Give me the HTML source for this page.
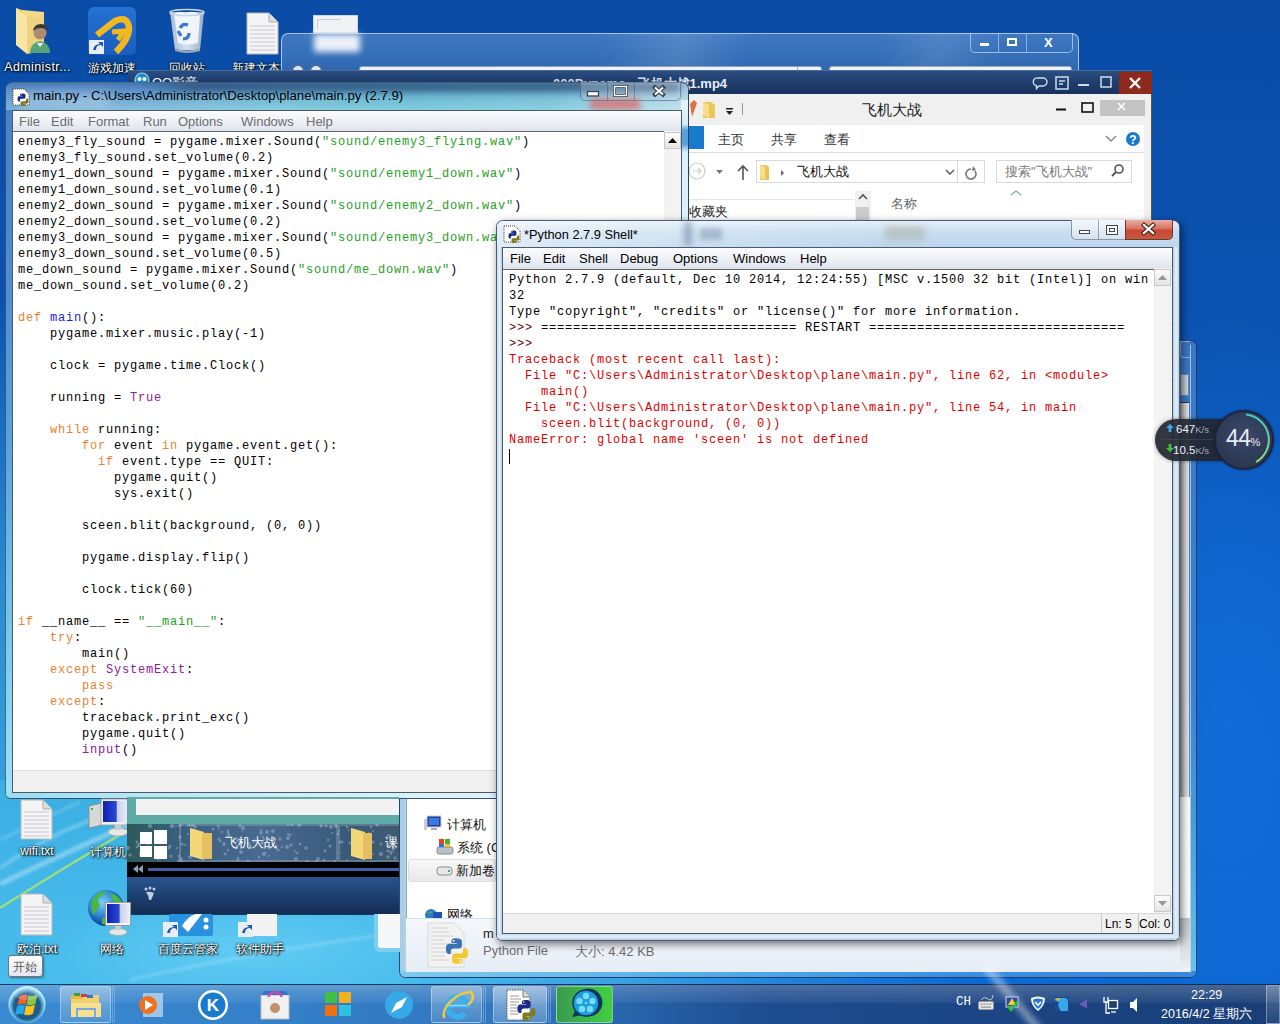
<!DOCTYPE html>
<html><head><meta charset="utf-8">
<style>
*{margin:0;padding:0;box-sizing:border-box}
html,body{width:1280px;height:1024px;overflow:hidden}
body{position:relative;font-family:"Liberation Sans",sans-serif;font-size:12px;background:#0b4fa9}
.a{position:absolute}
.mono{font-family:"Liberation Mono",monospace;font-size:12px;letter-spacing:0.8px;line-height:16px;white-space:pre;color:#000}
.menu span{position:absolute;top:2.5px}
.dl{position:absolute;color:#fff;font-size:12px;text-shadow:0 0 2px rgba(0,0,0,.9),1px 1px 2px #000,0 0 3px rgba(0,0,0,.6);white-space:nowrap;text-align:center}
.tbtn{position:absolute;border:1px solid rgba(255,255,255,.35);border-radius:3px;background:linear-gradient(180deg,rgba(255,255,255,.35),rgba(255,255,255,.12))}
</style></head><body>


<!-- ============ WALLPAPER ============ -->
<div class="a" style="left:0;top:0;width:1280px;height:1024px;background:
radial-gradient(ellipse 200px 400px at 1230px 720px,rgba(20,115,225,.6) 0%,rgba(13,106,210,0) 100%),
linear-gradient(180deg,#0a4ca6 0%,#0b52b0 30%,#0c5cc2 55%,#0d64ce 75%,#0d68d4 100%)"></div>
<div class="a" style="left:0;top:300px;width:20px;height:700px;background:linear-gradient(180deg,rgba(30,120,200,0) 0%,#2a8ad0 40%,#40b4e6 100%)"></div>
<div class="a" style="left:0;top:780px;width:420px;height:210px;background:linear-gradient(180deg,#3aaee2 0%,#45b9ea 60%,#48bcec 100%)"></div>
<div class="a" style="left:400px;top:970px;width:880px;height:14px;background:linear-gradient(90deg,#48b8ea 0%,#3aa2e2 25%,#2280d8 45%,#0e68d4 65%,#0d68d4 100%)"></div>
<div class="a" style="left:0;top:880px;width:420px;height:105px;background:radial-gradient(ellipse 220px 60px at 250px 70px,rgba(130,225,255,.45),rgba(130,225,255,0))"></div>
<svg class="a" style="left:0;top:780px" width="420" height="210">
<defs><filter id="bl" x="-20%" y="-20%" width="140%" height="140%"><feGaussianBlur stdDeviation="1.5"/></filter></defs>
<path d="M0 128 Q60 90 135 46" stroke="#a8e070" stroke-width="2.5" fill="none" opacity=".9"/>
<path d="M0 104 Q50 80 135 42" stroke="#fff" stroke-width="5" fill="none" opacity=".35" filter="url(#bl)"/>
<path d="M0 88 Q40 60 90 40" stroke="#fff" stroke-width="3" fill="none" opacity=".3" filter="url(#bl)"/>
<path d="M0 60 Q40 40 80 22" stroke="#fff" stroke-width="2" fill="none" opacity=".25" filter="url(#bl)"/>
<path d="M130 200 Q260 170 420 150" stroke="#fff" stroke-width="3" fill="none" opacity=".2" filter="url(#bl)"/>
</svg>

<!-- ============ TOP DESKTOP ICONS ============ -->
<!-- Administrator folder -->
<svg class="a" style="left:14px;top:7px" width="42" height="48">
<path d="M2 1 L30 10 L30 44 L2 38 Z" fill="#e6c870"/>
<path d="M8 3 L30 5 L30 40 L8 38 Z" fill="#f2da8a"/>
<path d="M2 1 L13 10 L13 47 L2 38Z" fill="#f7e6a4"/>
<path d="M13 10 L30 10 L30 44 L13 47Z" fill="#eed27e"/>
<path d="M16 46 q0-10 10-12 q10 2 10 12z" fill="#5aa27a"/>
<path d="M23 36 l3 4 3-4z" fill="#fff"/>
<circle cx="26" cy="26" r="6.5" fill="#b08a70"/>
<path d="M19 24 q1-7 8-7 q6 0 7 6 q-3-2-7-2 q-5 0-8 3z" fill="#3a3830"/>
</svg>
<div class="dl" style="left:0;top:60px;width:75px;font-size:12.5px;letter-spacing:.4px">Administr...</div>
<!-- game accel -->
<div class="a" style="left:88px;top:7px;width:48px;height:48px;border-radius:6px;background:linear-gradient(180deg,#2472d4,#1a5cc0)"></div>
<svg class="a" style="left:88px;top:7px" width="48" height="48">
<path d="M9 28 L27 14 Q41 8 41 23 Q40 33 28 45" fill="none" stroke="#f2b820" stroke-width="6.5"/>
<path d="M24 25 L36 24 L30 33" fill="none" stroke="#f2b820" stroke-width="5"/>
<rect x="1" y="33" width="15" height="14" fill="#e8eef6"/>
<path d="M5 43 q1-6 7-6 l-2-2 h5 v5 l-2-2 q-5 0-5 5z" fill="#1e5aa8"/>
</svg>
<div class="dl" style="left:80px;top:60px;width:64px">游戏加速</div>
<!-- recycle bin -->
<svg class="a" style="left:168px;top:8px" width="40" height="46">
<defs><linearGradient id="rb" x1="0" x2="1"><stop offset="0" stop-color="#b8c8d8"/><stop offset=".5" stop-color="#e8f0f8"/><stop offset="1" stop-color="#a8b8c8"/></linearGradient></defs>
<path d="M2 4 L36 4 L32 42 L7 42 Z" fill="url(#rb)" opacity=".9"/>
<path d="M6 6 q6-4 12 0 q6-5 14 1 l-2 28 q-10 3-20 0z" fill="#f4f8fc" opacity=".9"/>
<path d="M12 20 q3-5 8-3 M21 25 q0 6-6 6 M13 28 l-3-5" fill="none" stroke="#3a78d0" stroke-width="3.2"/>
<ellipse cx="19" cy="4.5" rx="17" ry="3" fill="none" stroke="#c8d4e0" stroke-width="1.5"/>
<path d="M7 40 Q19 45 32 40 L32 43 Q19 47 7 43Z" fill="#9aa8b8"/>
</svg>
<div class="dl" style="left:152px;top:60px;width:70px">回收站</div>
<!-- txt -->
<svg class="a" style="left:246px;top:12px" width="34" height="44">
<path d="M1 1 L23 1 L32 10 L32 42 L1 42Z" fill="#f4f4f4" stroke="#b8b8b8"/>
<path d="M23 1 L23 10 L32 10" fill="#dcdcdc" stroke="#b0b0b0"/>
<g stroke="#c8c8d0" stroke-width="1"><path d="M4 14h25M4 18h25M4 22h25M4 26h25M4 30h25M4 34h25M4 38h25"/></g>
</svg>
<div class="dl" style="left:232px;top:60px;width:60px;text-align:left;overflow:hidden;height:14px">新建文本文档</div>
<div class="a" style="left:313px;top:15px;width:45px;height:18px;background:#f0f2f4;border:1px solid #cfd6de"></div>
<div class="a" style="left:317px;top:19px;width:24px;height:10px;border:1px solid #c8ccd4;border-right:0;border-bottom:0"></div>

<!-- ============ BACK AERO WINDOW ============ -->
<div class="a" style="left:281px;top:33px;width:798px;height:40px;border-radius:7px 7px 0 0;border:1px solid rgba(200,220,245,.8);border-bottom:0;background:linear-gradient(100deg,rgba(255,255,255,0) 40%,rgba(255,255,255,.12) 50%,rgba(255,255,255,0) 58%,rgba(255,255,255,0) 75%,rgba(255,255,255,.1) 82%,rgba(255,255,255,0) 90%),linear-gradient(180deg,#3f78c2 0%,#3670b8 50%,#2f66ae 100%)"></div>
<div class="a" style="left:314px;top:34px;width:46px;height:18px;background:rgba(245,248,252,.95);filter:blur(3px)"></div>
<div class="a" style="left:970px;top:33px;width:103px;height:20px;border:1px solid rgba(220,235,255,.6);border-top:0;border-radius:0 0 5px 5px"></div>
<div class="a" style="left:998px;top:33px;width:1px;height:19px;background:rgba(220,235,255,.5)"></div>
<div class="a" style="left:1026px;top:33px;width:1px;height:19px;background:rgba(220,235,255,.5)"></div>
<div class="a" style="left:980px;top:43px;width:9px;height:3px;background:#fff"></div>
<div class="a" style="left:1007px;top:38px;width:10px;height:8px;border:2px solid #fff"></div>
<div class="a" style="left:1044px;top:35px;font-size:13px;font-weight:bold;color:#fff">X</div>
<div class="a" style="left:829px;top:66px;width:243px;height:6px;border-radius:3px 3px 0 0;background:#eef2f6;border:1px solid #9ab"></div>
<div class="a" style="left:359px;top:66px;width:463px;height:6px;border-radius:3px 3px 0 0;background:#eef2f6;border:1px solid #8aa0c0"></div>
<div class="a" style="left:797px;top:66px;width:1px;height:5px;background:#aab"></div>
<div class="a" style="left:291px;top:64px;width:14px;height:14px;border-radius:50%;background:#dde6f0;border:2px solid #4a6a98"></div>
<div class="a" style="left:309px;top:64px;width:14px;height:14px;border-radius:50%;background:#dde6f0;border:2px solid #4a6a98"></div>

<!-- ============ QQ PLAYER TITLE ============ -->
<div class="a" style="left:128px;top:70px;width:1024px;height:25px;background:linear-gradient(180deg,#2b4d80 0%,#1f3d6c 50%,#16315c 100%);border-top:1px solid #4a6a9a"></div>
<svg class="a" style="left:134px;top:72px" width="16" height="16"><circle cx="8" cy="8" r="7" fill="#1c8cc8" stroke="#8ad8f8" stroke-width="1.2"/><circle cx="5.5" cy="7" r="2" fill="#fff"/><circle cx="10.5" cy="7" r="2" fill="#fff"/></svg>
<div class="a" style="left:152px;top:74px;color:#fff;font-size:13px">QQ影音</div>
<div class="a" style="left:553px;top:75px;color:#e8eef8;font-size:13px;font-weight:bold">000Dynamo - 飞机大战1.mp4</div>
<svg class="a" style="left:1030px;top:72px" width="122" height="22">
<path d="M8 6 h5 a3.5 3.5 0 0 1 0 8 h-4 l-2.5 2.5 v-2.7 a3.6 3.6 0 0 1 1.5-7.8z" fill="none" stroke="#cde" stroke-width="1.4"/>
<path d="M26 5 h12 v12 h-12z M29 9 h6 M29 12 h4" fill="none" stroke="#cde" stroke-width="1.5"/>
<path d="M48 13 h11" stroke="#cde" stroke-width="2"/>
<path d="M71 5 h10 v10 h-10z" fill="none" stroke="#cde" stroke-width="1.5"/>
<rect x="89" y="0" width="33" height="22" fill="#8e2a1c"/>
<path d="M100 6 l10 10 M110 6 l-10 10" stroke="#fff" stroke-width="2.4"/>
</svg>

<!-- ============ EXPLORER (WIN8) TOP ============ -->
<div class="a" style="left:686px;top:94px;width:466px;height:127px;background:#f0f0f0;border-right:1px solid #555"></div>
<div class="a" style="left:688px;top:125px;width:456px;height:100px;background:#fff"></div>
<div class="a" style="left:688px;top:126px;width:16px;height:23px;background:#1979ca"></div>
<div class="a" style="left:718px;top:131px;font-size:13px;color:#333">主页</div>
<div class="a" style="left:771px;top:131px;font-size:13px;color:#333">共享</div>
<div class="a" style="left:824px;top:131px;font-size:13px;color:#333">查看</div>
<div class="a" style="left:688px;top:152px;width:456px;height:1px;background:#dadbdc"></div>
<div class="a" style="left:862px;top:101px;font-size:15px;color:#222">飞机大战</div>
<svg class="a" style="left:688px;top:96px" width="80" height="28">
<path d="M2 8 l4 -4 l3 3 l-5 14z" fill="#e07040"/>
<path d="M15 6 h8 l4 3 v13 h-12z" fill="#eac75a"/><path d="M15 6 l6 3 v13 l-6-3z" fill="#f6df8a"/>
<path d="M38 15 h7 l-3.5 4z" fill="#222"/><rect x="38" y="12" width="7" height="1.5" fill="#222"/>
<rect x="54" y="7" width="1" height="12" fill="#999"/>
</svg>
<svg class="a" style="left:1050px;top:100px" width="96" height="18">
<rect x="6" y="8.5" width="10" height="2" fill="#111"/>
<rect x="32" y="3" width="11" height="9" fill="none" stroke="#111" stroke-width="1.6"/>
<rect x="50" y="-4" width="45" height="20" fill="#c3c3c3"/>
<path d="M68 3 l7 7 M75 3 l-7 7" stroke="#fff" stroke-width="1.5"/>
</svg>
<svg class="a" style="left:1100px;top:130px" width="44" height="18">
<path d="M6 6 l5 5 l5-5" fill="none" stroke="#888" stroke-width="1.5"/>
<circle cx="33" cy="9" r="7" fill="#1a7ad0"/>
<text x="33" y="13.5" font-size="12" font-weight="bold" fill="#fff" text-anchor="middle" font-family="Liberation Sans">?</text>
</svg>
<!-- address row -->
<svg class="a" style="left:688px;top:158px" width="70" height="26">
<circle cx="9" cy="13" r="8" fill="none" stroke="#ccc" stroke-width="1.2"/>
<path d="M5 13h8 M10 10l3 3-3 3" fill="none" stroke="#ccc" stroke-width="1.2"/>
<path d="M28 12h7l-3.5 4z" fill="#777"/>
<path d="M55 22 v-14 M50 13 l5-5 l5 5" fill="none" stroke="#555" stroke-width="1.6"/>
</svg>
<div class="a" style="left:756px;top:160px;width:229px;height:23px;border:1px solid #d9d9d9;background:#fff"></div>
<div class="a" style="left:957px;top:160px;width:1px;height:23px;background:#d9d9d9"></div>
<svg class="a" style="left:760px;top:162px" width="225" height="20">
<path d="M0 3 h6 l3 2 v13 h-9z" fill="#e8c457"/><path d="M0 3 l5 2 v13 l-5-2z" fill="#f6df88"/>
<path d="M21 8 l3 3 -3 3z" fill="#666"/>
<path d="M186 8 l4 4 4-4" fill="none" stroke="#555" stroke-width="1.4"/>
<path d="M211 7 a5 5 0 1 0 4 2" fill="none" stroke="#777" stroke-width="1.6"/><path d="M213 4 l3 4 -4 1z" fill="#777"/>
</svg>
<div class="a" style="left:797px;top:163px;font-size:13px;color:#111">飞机大战</div>
<div class="a" style="left:996px;top:160px;width:136px;height:23px;border:1px solid #d9d9d9;background:#fff"></div>
<div class="a" style="left:1005px;top:163px;font-size:13px;color:#777">搜索"飞机大战"</div>
<svg class="a" style="left:1110px;top:163px" width="16" height="16"><circle cx="9" cy="6" r="4" fill="none" stroke="#555" stroke-width="1.6"/><path d="M6 9 l-4 4" stroke="#555" stroke-width="2"/></svg>
<div class="a" style="left:688px;top:199px;width:166px;height:1px;background:#e5e5e5"></div>
<div class="a" style="left:689px;top:203px;font-size:13px;color:#222">收藏夹</div>
<div class="a" style="left:855px;top:191px;width:16px;height:30px;background:#f0f0f0"></div>
<svg class="a" style="left:855px;top:191px" width="16" height="14"><path d="M4 8 l4-4 4 4" fill="none" stroke="#555" stroke-width="1.6"/></svg>
<div class="a" style="left:856px;top:207px;width:13px;height:15px;background:#cdcdcd"></div>
<div class="a" style="left:891px;top:195px;font-size:13px;color:#666">名称</div>
<svg class="a" style="left:1010px;top:189px" width="12" height="8"><path d="M1 6 l5-4 5 4" fill="none" stroke="#8aa" stroke-width="1.3"/></svg>

<!-- ============ BOTTOM EXPLORER (WIN7) ============ -->
<div class="a" style="left:399px;top:340px;width:798px;height:638px;border-radius:7px;background:linear-gradient(180deg,#3a78c4 0%,#3d82cf 55%,#4a9ada 75%,#6cc2ec 100%);border:1px solid rgba(20,50,90,.8)"></div>
<div class="a" style="left:400px;top:790px;width:96px;height:187px;border-radius:0 0 0 6px;background:linear-gradient(90deg,#a8cce4 0%,#e4f2fa 45%,#a8d0ec 100%)"></div>
<div class="a" style="left:400px;top:971px;width:796px;height:6px;border-radius:0 0 6px 6px;background:linear-gradient(90deg,#7ecbee 0%,#5eb2e8 30%,#3d8ee0 70%,#3a86dc 100%)"></div>
<div class="a" style="left:1190px;top:345px;width:1px;height:628px;background:rgba(230,240,255,.6)"></div>
<div class="a" style="left:1180px;top:341px;width:10px;height:17px;border:1px solid rgba(200,220,245,.6);border-right:0;border-radius:0 0 0 4px"></div>
<div class="a" style="left:1180px;top:374px;width:9px;height:22px;background:linear-gradient(90deg,#a8b0bc,#d8dce0);border:1px solid #6a88b0"></div>
<div class="a" style="left:1180px;top:402px;width:9px;height:516px;background:linear-gradient(90deg,#a0a0a0 0%,#d0d0d0 50%,#e8e8e8 100%);border-top:1px solid #333"></div>
<div class="a" style="left:406px;top:797px;width:784px;height:175px;background:#fff;border-left:1px solid #8fa8c0"></div>
<div class="a" style="left:1180px;top:918px;width:10px;height:54px;background:linear-gradient(180deg,#c8c8c8,#eef2f6)"></div>
<div class="a" style="left:406px;top:918px;width:774px;height:54px;background:linear-gradient(180deg,#f4f7fb,#e6edf5);border-top:1px solid #d5dfea"></div>
<svg class="a" style="left:424px;top:815px" width="20" height="18">
<rect x="3" y="1" width="14" height="11" fill="#1e3f9a" stroke="#ccd" /><rect x="5" y="3" width="10" height="7" fill="#3a7ae0"/>
<rect x="7" y="13" width="6" height="2" fill="#aaa"/><rect x="0" y="4" width="3" height="11" fill="#ccc"/>
</svg>
<div class="a" style="left:447px;top:816px;font-size:13px;color:#111">计算机</div>
<svg class="a" style="left:436px;top:838px" width="18" height="18">
<rect x="1" y="9" width="16" height="7" rx="2" fill="#b8c0c8" stroke="#889"/>
<rect x="3" y="1" width="5" height="5" fill="#e84020"/><rect x="9" y="1" width="5" height="5" fill="#4ab030"/><rect x="3" y="6" width="5" height="3" fill="#2a70e0"/><rect x="9" y="6" width="5" height="3" fill="#f0c020"/>
</svg>
<div class="a" style="left:457px;top:839px;font-size:13px;color:#111">系统 (C</div>
<div class="a" style="left:408px;top:859px;width:88px;height:23px;background:linear-gradient(180deg,#f8f8f8,#e8e8e8);border:1px solid #ddd;border-radius:3px"></div>
<svg class="a" style="left:436px;top:865px" width="18" height="12"><rect x="1" y="2" width="15" height="8" rx="3" fill="#e6e8ea" stroke="#889"/><rect x="12" y="5" width="2" height="2" fill="#4a4"/></svg>
<div class="a" style="left:456px;top:862px;font-size:13px;color:#111">新加卷</div>
<svg class="a" style="left:425px;top:908px" width="18" height="10"><circle cx="6" cy="7" r="6" fill="#2a80c0"/><path d="M2 5 q3-3 6 0" fill="#4ab040"/><rect x="8" y="4" width="9" height="7" fill="#2050b0"/></svg>
<div class="a" style="left:447px;top:906px;font-size:13px;color:#111;height:12px;overflow:hidden">网络</div>
<svg class="a" style="left:427px;top:922px" width="42" height="46">
<path d="M1 1 h26 l10 10 v34 h-36z" fill="#f2f2f2" stroke="#d8d8d8"/>
<g stroke="#d0d0d0"><path d="M4 6h16M4 10h18M4 14h22M4 18h14M4 22h20M4 26h16M4 30h22M4 34h14M4 38h18"/></g>
<svg x="16" y="15" width="28" height="28" viewBox="0 0 24 24"><path d="M11.6 1 C7 1 7.3 3 7.3 3 v2.1 h4.4 v0.6 H5.5 S2.5 5.4 2.5 10.1 s2.6 4.5 2.6 4.5 h1.6 v-2.2 s-0.1-2.6 2.6-2.6 h4.4 s2.5 0 2.5-2.4 V3.5 S16.5 1 11.6 1z M9.2 2.4 a0.8 0.8 0 1 1 0 1.6 a0.8 0.8 0 1 1 0-1.6z" fill="#3a74b0"/>
<path d="M12.4 23 C17 23 16.7 21 16.7 21 v-2.1 h-4.4 v-0.6 h6.2 s3 0.3 3-4.4 s-2.6-4.5-2.6-4.5 h-1.6 v2.2 s0.1 2.6-2.6 2.6 H10.3 s-2.5 0-2.5 2.4 v3.9 S7.5 23 12.4 23z M14.8 21.6 a0.8 0.8 0 1 1 0-1.6 a0.8 0.8 0 1 1 0 1.6z" fill="#f2c935"/></svg>
</svg>
<div class="a" style="left:483px;top:926px;font-size:13px;color:#222">m</div>
<div class="a" style="left:483px;top:943px;font-size:13px;color:#6d6d6d">Python File</div>
<div class="a" style="left:575px;top:943px;font-size:13px;color:#6d6d6d">大小: 4.42 KB</div>

<!-- ============ IDLE EDITOR WINDOW ============ -->
<div class="a" style="left:5px;top:82px;width:684px;height:717px;border-radius:7px 7px 6px 6px;border:1px solid rgba(40,60,90,.7);background:linear-gradient(180deg,#4a80c4 0%,#4c88c8 20%,#5aa2d8 50%,#7ccaee 80%,#a0e2f6 100%)"></div>
<div class="a" style="left:6px;top:83px;width:682px;height:27px;border-radius:6px 6px 0 0;background:linear-gradient(90deg,rgba(90,140,200,.5) 0%,rgba(90,140,200,.3) 18%,rgba(100,190,205,.35) 38%,rgba(100,195,210,.5) 60%,rgba(120,205,215,.5) 80%,rgba(220,240,245,.6) 100%),linear-gradient(180deg,#3a6aaa 0%,#5a90c8 25%,#88c0dc 70%,#9cd4e8 100%)"></div>
<div class="a" style="left:140px;top:82px;width:540px;height:10px;background:linear-gradient(90deg,rgba(25,45,85,0) 0%,rgba(25,45,85,.55) 10%,rgba(25,45,85,.55) 100%);filter:blur(3px)"></div>
<div class="a" style="left:20px;top:92px;width:90px;height:16px;background:rgba(255,255,255,.25);filter:blur(6px)"></div>
<div class="a" style="left:590px;top:98px;width:50px;height:12px;background:rgba(220,110,110,.8);filter:blur(3px)"></div>
<div class="a" style="left:681px;top:100px;width:7px;height:698px;border-radius:0 0 6px 0;background:linear-gradient(180deg,#e4f5f9 0px,#d6eef6 24px,#5aa0dc 30px,#5aa0dc 44px,#d8f0f8 52px,#e0f4fa 200px,#c4ecf8 100%)"></div>
<div class="a" style="left:688px;top:90px;width:1px;height:708px;background:rgba(40,60,90,.7)"></div>
<svg class="a" style="left:12px;top:88px" width="18" height="18">
<path d="M1 1 h11 l5 5 v11 h-16z" fill="#fff" stroke="#444" stroke-dasharray="1 1"/>
<svg x="4" y="5" width="14" height="14" viewBox="0 0 24 24"><path d="M11.6 1 C7 1 7.3 3 7.3 3 v2.1 h4.4 v0.6 H5.5 S2.5 5.4 2.5 10.1 s2.6 4.5 2.6 4.5 h1.6 v-2.2 s-0.1-2.6 2.6-2.6 h4.4 s2.5 0 2.5-2.4 V3.5 S16.5 1 11.6 1z M9.2 2.4 a0.8 0.8 0 1 1 0 1.6 a0.8 0.8 0 1 1 0-1.6z" fill="#1c2c84"/>
<path d="M12.4 23 C17 23 16.7 21 16.7 21 v-2.1 h-4.4 v-0.6 h6.2 s3 0.3 3-4.4 s-2.6-4.5-2.6-4.5 h-1.6 v2.2 s0.1 2.6-2.6 2.6 H10.3 s-2.5 0-2.5 2.4 v3.9 S7.5 23 12.4 23z M14.8 21.6 a0.8 0.8 0 1 1 0-1.6 a0.8 0.8 0 1 1 0 1.6z" fill="#807a24"/></svg>
</svg>
<div class="a" style="left:33px;top:88px;font-size:13.2px;color:#000">main.py - C:\Users\Administrator\Desktop\plane\main.py (2.7.9)</div>
<!-- title buttons -->
<div class="a" style="left:580px;top:82px;width:101px;height:19px;border:1px solid rgba(60,80,110,.55);border-top:0;border-radius:0 0 5px 5px;background:linear-gradient(180deg,rgba(255,255,255,.25),rgba(255,255,255,.05))"></div>
<div class="a" style="left:607px;top:82px;width:1px;height:18px;background:rgba(60,80,110,.45)"></div>
<div class="a" style="left:634px;top:82px;width:1px;height:18px;background:rgba(60,80,110,.45)"></div>
<svg class="a" style="left:580px;top:82px" width="101" height="19">
<rect x="7.5" y="9.5" width="11" height="4.5" fill="#fff" stroke="#3a4450" stroke-width="1.3"/>
<rect x="34.5" y="4.5" width="12" height="9" fill="none" stroke="#3a4450" stroke-width="3"/><rect x="34.5" y="4.5" width="12" height="9" fill="none" stroke="#fff" stroke-width="1.4"/>
<path d="M75 5.5 l8 7 M83 5.5 l-8 7" stroke="#3a4450" stroke-width="4.2" stroke-linecap="square"/>
<path d="M75 5.5 l8 7 M83 5.5 l-8 7" stroke="#fff" stroke-width="2" stroke-linecap="butt"/>
</svg>
<div class="a" style="left:6px;top:792px;width:675px;height:6px;border-radius:0 0 0 5px;background:linear-gradient(90deg,#98dcf0 0%,#b8e8f6 20%,#d8f0f8 55%,#eef8fb 100%)"></div>
<!-- client -->
<div class="a" style="left:12px;top:110px;width:670px;height:683px;background:#f0f0f0;border:1px solid #4a5a6a"></div>
<div class="a menu" style="left:13px;top:111px;width:668px;height:20px;background:linear-gradient(180deg,#fafbfd 0%,#eef1f6 50%,#dde3ee 100%);color:#6d6d6d;font-size:13px">
<span style="left:6px">File</span><span style="left:38px">Edit</span><span style="left:75px">Format</span><span style="left:130px">Run</span><span style="left:165px">Options</span><span style="left:228px">Windows</span><span style="left:293px">Help</span>
</div>
<div class="a" style="left:13px;top:131px;width:651px;height:639px;background:#fff;border-top:1px solid #646464;overflow:hidden">
<div class="a mono" style="left:5px;top:2px">enemy3_fly_sound = pygame.mixer.Sound(<span style="color:#1ea01e">&quot;sound/enemy3_flying.wav&quot;</span>)
enemy3_fly_sound.set_volume(0.2)
enemy1_down_sound = pygame.mixer.Sound(<span style="color:#1ea01e">&quot;sound/enemy1_down.wav&quot;</span>)
enemy1_down_sound.set_volume(0.1)
enemy2_down_sound = pygame.mixer.Sound(<span style="color:#1ea01e">&quot;sound/enemy2_down.wav&quot;</span>)
enemy2_down_sound.set_volume(0.2)
enemy3_down_sound = pygame.mixer.Sound(<span style="color:#1ea01e">&quot;sound/enemy3_down.wav&quot;</span>)
enemy3_down_sound.set_volume(0.5)
me_down_sound = pygame.mixer.Sound(<span style="color:#1ea01e">&quot;sound/me_down.wav&quot;</span>)
me_down_sound.set_volume(0.2)

<span style="color:#e8822e">def</span> <span style="color:#1a1aee">main</span>():
    pygame.mixer.music.play(-1)

    clock = pygame.time.Clock()

    running = <span style="color:#8a2090">True</span>

    <span style="color:#e8822e">while</span> running:
        <span style="color:#e8822e">for</span> event <span style="color:#e8822e">in</span> pygame.event.get():
          <span style="color:#e8822e">if</span> event.type == QUIT:
            pygame.quit()
            sys.exit()

        sceen.blit(background, (0, 0))

        pygame.display.flip()

        clock.tick(60)

<span style="color:#e8822e">if</span> __name__ == <span style="color:#1ea01e">&quot;__main__&quot;</span>:
    <span style="color:#e8822e">try</span>:
        main()
    <span style="color:#e8822e">except</span> <span style="color:#8a2090">SystemExit</span>:
        <span style="color:#e8822e">pass</span>
    <span style="color:#e8822e">except</span>:
        traceback.print_exc()
        pygame.quit()
        <span style="color:#8a2090">input</span>()</div>
</div>
<div class="a" style="left:664px;top:131px;width:17px;height:639px;background:repeating-conic-gradient(#ececec 0 25%,#fbfbfb 0 50%) 0 0/2px 2px;border-left:1px solid #f0f0f0"></div>
<div class="a" style="left:664px;top:132px;width:17px;height:17px;background:linear-gradient(180deg,#fcfcfc,#e4e4e4);border:1px solid #c8c8c8"></div>
<svg class="a" style="left:664px;top:132px" width="17" height="17"><path d="M4 11 h9 l-4.5-5z" fill="#000"/></svg>
<div class="a" style="left:13px;top:770px;width:668px;height:22px;background:#f0f0f0;border-top:1px solid #e0e0e0"></div>

<!-- ============ SHELL WINDOW ============ -->
<div class="a" style="left:496px;top:220px;width:684px;height:721px;border-radius:7px 7px 6px 6px;border:1px solid rgba(40,60,90,.8);box-shadow:2px 3px 9px rgba(0,0,0,.55);background:linear-gradient(180deg,#bcd6ee 0%,#c9e0f3 10%,#cfe4f5 100%)"></div>
<div class="a" style="left:497px;top:221px;width:682px;height:26px;border-radius:6px 6px 0 0;background:linear-gradient(90deg,rgba(255,255,255,.5) 0%,rgba(255,255,255,.2) 30%,rgba(255,255,255,0) 60%),linear-gradient(180deg,#e6f0f8 0%,#c9def0 40%,#bcd6ee 100%)"></div>
<div class="a" style="left:684px;top:222px;width:8px;height:24px;background:rgba(70,100,140,.45);filter:blur(3px)"></div>
<div class="a" style="left:700px;top:228px;width:22px;height:12px;background:rgba(90,110,140,.35);filter:blur(2.5px)"></div>
<div class="a" style="left:885px;top:226px;width:40px;height:14px;background:rgba(150,140,100,.3);filter:blur(3px)"></div>
<svg class="a" style="left:503px;top:225px" width="18" height="18">
<path d="M1 1 h11 l5 5 v11 h-16z" fill="#fff" stroke="#444" stroke-dasharray="1 1"/>
<svg x="4" y="5" width="14" height="14" viewBox="0 0 24 24"><path d="M11.6 1 C7 1 7.3 3 7.3 3 v2.1 h4.4 v0.6 H5.5 S2.5 5.4 2.5 10.1 s2.6 4.5 2.6 4.5 h1.6 v-2.2 s-0.1-2.6 2.6-2.6 h4.4 s2.5 0 2.5-2.4 V3.5 S16.5 1 11.6 1z M9.2 2.4 a0.8 0.8 0 1 1 0 1.6 a0.8 0.8 0 1 1 0-1.6z" fill="#1c2c84"/>
<path d="M12.4 23 C17 23 16.7 21 16.7 21 v-2.1 h-4.4 v-0.6 h6.2 s3 0.3 3-4.4 s-2.6-4.5-2.6-4.5 h-1.6 v2.2 s0.1 2.6-2.6 2.6 H10.3 s-2.5 0-2.5 2.4 v3.9 S7.5 23 12.4 23z M14.8 21.6 a0.8 0.8 0 1 1 0-1.6 a0.8 0.8 0 1 1 0 1.6z" fill="#807a24"/></svg>
</svg>
<div class="a" style="left:524px;top:227px;font-size:12.8px;color:#000">*Python 2.7.9 Shell*</div>
<div class="a" style="left:1071px;top:220px;width:102px;height:20px;border:1px solid rgba(70,90,120,.6);border-top:0;border-radius:0 0 5px 5px;background:linear-gradient(180deg,#f4f8fc,#d6e2ee)"></div>
<div class="a" style="left:1098px;top:220px;width:1px;height:19px;background:rgba(70,90,120,.5)"></div>
<div class="a" style="left:1125px;top:220px;width:48px;height:20px;border-radius:0 0 5px 0;background:linear-gradient(180deg,#eab0a4 0%,#d87060 45%,#c84830 55%,#c85840 100%);border:1px solid #6a3a30;border-top:0"></div>
<div class="a" style="left:1079px;top:230px;width:11px;height:4px;border:1px solid #445;background:#fff"></div>
<div class="a" style="left:1106px;top:225px;width:12px;height:10px;border:1px solid #445;background:#fff"></div>
<div class="a" style="left:1109px;top:228px;width:6px;height:4px;border:1px solid #445"></div>
<svg class="a" style="left:1125px;top:220px" width="48" height="20"><path d="M19 5 l9 8 M28 5 l-9 8" stroke="#4a2a2a" stroke-width="4.4" stroke-linecap="square"/><path d="M19 5 l9 8 M28 5 l-9 8" stroke="#fff" stroke-width="2.2" stroke-linecap="square"/></svg>
<div class="a" style="left:497px;top:247px;width:5px;height:693px;border-radius:0 0 0 5px;background:linear-gradient(90deg,#c0d8ee,#e8f2fa 50%,#b4cce4)"></div>
<div class="a" style="left:1173px;top:247px;width:6px;height:693px;border-radius:0 0 5px 0;background:linear-gradient(90deg,#b4cce4,#e8f2fa 50%,#b8d0e8)"></div>
<div class="a" style="left:497px;top:934px;width:682px;height:6px;border-radius:0 0 5px 5px;background:linear-gradient(180deg,#c4daf0,#e4f0fa 50%,#b0c8e0)"></div>
<div class="a" style="left:502px;top:247px;width:671px;height:687px;background:#f0f0f0;border:1px solid #4a5a6a"></div>
<div class="a menu" style="left:503px;top:248px;width:669px;height:21px;background:linear-gradient(180deg,#fafbfd 0%,#eef1f6 50%,#dde3ee 100%);color:#000;font-size:13px">
<span style="left:7px">File</span><span style="left:40px">Edit</span><span style="left:76px">Shell</span><span style="left:117px">Debug</span><span style="left:170px">Options</span><span style="left:230px">Windows</span><span style="left:297px">Help</span>
</div>
<div class="a" style="left:503px;top:269px;width:651px;height:644px;background:#fff;border-top:1px solid #646464;overflow:hidden">
<div class="a mono" style="left:6px;top:2px">Python 2.7.9 (default, Dec 10 2014, 12:24:55) [MSC v.1500 32 bit (Intel)] on win
32
Type &quot;copyright&quot;, &quot;credits&quot; or &quot;license()&quot; for more information.
<span style="color:#770000">&gt;&gt;&gt; </span>================================ RESTART ================================
<span style="color:#770000">&gt;&gt;&gt; </span>
<span style="color:#dd0000">Traceback (most recent call last):</span>
<span style="color:#dd0000">  File &quot;C:\Users\Administrator\Desktop\plane\main.py&quot;, line 62, in &lt;module&gt;</span>
<span style="color:#dd0000">    main()</span>
<span style="color:#dd0000">  File &quot;C:\Users\Administrator\Desktop\plane\main.py&quot;, line 54, in main</span>
<span style="color:#dd0000">    sceen.blit(background, (0, 0))</span>
<span style="color:#dd0000">NameError: global name &#x27;sceen&#x27; is not defined</span></div>
<div class="a" style="left:6px;top:179px;width:1px;height:15px;background:#000"></div>
</div>
<div class="a" style="left:1154px;top:268px;width:18px;height:645px;background:repeating-conic-gradient(#ececec 0 25%,#fbfbfb 0 50%) 0 0/2px 2px"></div>
<div class="a" style="left:1154px;top:269px;width:17px;height:17px;background:linear-gradient(180deg,#fcfcfc,#e4e4e4);border:1px solid #c8c8c8"></div>
<svg class="a" style="left:1154px;top:269px" width="17" height="17"><path d="M4 11 h9 l-4.5-5z" fill="#999"/></svg>
<div class="a" style="left:1154px;top:895px;width:17px;height:17px;background:linear-gradient(180deg,#fcfcfc,#e4e4e4);border:1px solid #c8c8c8"></div>
<svg class="a" style="left:1154px;top:895px" width="17" height="17"><path d="M4 6 h9 l-4.5 5z" fill="#999"/></svg>
<div class="a" style="left:503px;top:913px;width:669px;height:20px;background:#f0f0f0;border-top:1px solid #d8d8d8"></div>
<div class="a" style="left:1101px;top:914px;width:71px;height:19px;border-left:1px solid #c8c8c8"></div>
<div class="a" style="left:1138px;top:914px;width:1px;height:19px;background:#c8c8c8"></div>
<div class="a" style="left:1105px;top:917px;font-size:12px;color:#000">Ln: 5</div>
<div class="a" style="left:1139px;top:917px;font-size:12px;color:#000">Col: 0</div>

<!-- ============ NETWORK WIDGET ============ -->
<div class="a" style="left:1155px;top:419px;width:80px;height:42px;border-radius:21px 0 0 21px;background:rgba(34,38,48,.92);box-shadow:0 0 4px rgba(0,0,0,.35)"></div>
<div class="a" style="left:1162px;top:439px;width:66px;height:1px;background:rgba(70,76,90,.6)"></div>
<div class="a" style="left:1214px;top:410px;width:60px;height:60px;border-radius:50%;background:radial-gradient(circle at 50% 40%,#3a4868,#27324a);border:2px solid #1a2640;box-shadow:0 0 3px rgba(0,0,0,.4)"></div>
<svg class="a" style="left:1214px;top:410px" width="60" height="60">
<defs><linearGradient id="arc" x1="0" y1="0" x2="0" y2="1"><stop offset="0" stop-color="#40c8c8"/><stop offset="1" stop-color="#90d880"/></linearGradient></defs>
<path d="M32 4.5 A25.5 25.5 0 0 1 42 52" fill="none" stroke="url(#arc)" stroke-width="2"/></svg>
<div class="a" style="left:1226px;top:425px;font-size:23px;color:#e8ecf4;letter-spacing:-.5px">44<span style="font-size:11px">%</span></div>
<svg class="a" style="left:1165px;top:423px" width="10" height="30">
<path d="M5 1 l4 4 h-2.6 v4 h-2.8 v-4 h-2.6z" fill="#40a8e8"/>
<path d="M5 29 l4-4 h-2.6 v-4 h-2.8 v4 h-2.6z" fill="#40c040"/>
</svg>
<div class="a" style="left:1176px;top:423px;font-size:11.5px;color:#eef">647<span style="font-size:9.5px;color:#aab">K/s</span></div>
<div class="a" style="left:1173px;top:444px;font-size:11.5px;color:#eef">10.5<span style="font-size:9.5px;color:#aab">K/s</span></div>

<!-- ============ QQ PLAYER BOTTOM ============ -->
<div class="a" style="left:127px;top:797px;width:272px;height:118px;background:#1b3560;border-radius:0 0 0 4px"></div>
<div class="a" style="left:127px;top:797px;width:272px;height:27px;background:#5eaaa4"></div>
<div class="a" style="left:136px;top:799px;width:263px;height:16px;background:#f2f2f2"></div>
<div class="a" style="left:127px;top:824px;width:272px;height:38px;background:linear-gradient(90deg,#2e5a5a 0%,#3a6080 20%,#4a6a90 50%,#3a5a7a 80%,#405a70 100%)"></div>
<svg class="a" style="left:127px;top:824px" width="272" height="38">
<g fill="#a8bce0" opacity=".45"><circle cx="121" cy="37" r="1.6"/><circle cx="189" cy="38" r="1.5"/><circle cx="33" cy="38" r="0.8"/><circle cx="240" cy="16" r="1.6"/><circle cx="98" cy="30" r="1.6"/><circle cx="243" cy="25" r="1.7"/><circle cx="77" cy="14" r="1.7"/><circle cx="267" cy="24" r="1.8"/><circle cx="32" cy="10" r="1.9"/><circle cx="21" cy="19" r="1.9"/><circle cx="137" cy="30" r="1.6"/><circle cx="198" cy="27" r="1.4"/><circle cx="227" cy="8" r="2.0"/><circle cx="49" cy="2" r="1.0"/><circle cx="111" cy="16" r="2.2"/><circle cx="223" cy="19" r="1.4"/><circle cx="197" cy="36" r="1.3"/><circle cx="208" cy="37" r="1.1"/><circle cx="172" cy="1" r="2.0"/><circle cx="83" cy="20" r="2.2"/><circle cx="53" cy="13" r="1.7"/><circle cx="136" cy="18" r="1.0"/><circle cx="246" cy="30" r="0.9"/><circle cx="34" cy="26" r="2.1"/><circle cx="10" cy="18" r="1.4"/><circle cx="212" cy="7" r="0.9"/><circle cx="23" cy="24" r="1.8"/><circle cx="169" cy="35" r="2.0"/><circle cx="142" cy="32" r="1.1"/><circle cx="18" cy="19" r="0.8"/><circle cx="55" cy="38" r="1.5"/><circle cx="101" cy="26" r="1.2"/><circle cx="134" cy="9" r="1.8"/><circle cx="173" cy="20" r="1.3"/><circle cx="70" cy="24" r="1.3"/><circle cx="266" cy="24" r="1.7"/><circle cx="52" cy="32" r="1.2"/><circle cx="121" cy="19" r="1.4"/><circle cx="132" cy="33" r="1.2"/><circle cx="173" cy="0" r="1.9"/><circle cx="161" cy="1" r="1.3"/><circle cx="68" cy="3" r="1.7"/><circle cx="170" cy="29" r="1.3"/><circle cx="180" cy="38" r="1.8"/><circle cx="250" cy="1" r="1.6"/><circle cx="10" cy="23" r="1.2"/><circle cx="233" cy="19" r="1.6"/><circle cx="163" cy="11" r="1.3"/><circle cx="160" cy="23" r="2.0"/><circle cx="135" cy="19" r="1.9"/><circle cx="53" cy="1" r="2.2"/><circle cx="67" cy="19" r="1.5"/><circle cx="137" cy="15" r="1.3"/><circle cx="222" cy="6" r="0.9"/><circle cx="164" cy="21" r="1.7"/><circle cx="114" cy="28" r="1.9"/><circle cx="86" cy="5" r="1.3"/><circle cx="111" cy="36" r="1.4"/><circle cx="115" cy="7" r="0.8"/><circle cx="97" cy="20" r="1.9"/><circle cx="93" cy="17" r="1.3"/><circle cx="43" cy="22" r="1.6"/><circle cx="215" cy="18" r="1.5"/><circle cx="138" cy="29" r="1.3"/><circle cx="213" cy="18" r="1.4"/><circle cx="209" cy="2" r="2.1"/><circle cx="79" cy="12" r="0.8"/><circle cx="261" cy="27" r="1.6"/><circle cx="113" cy="2" r="1.8"/><circle cx="265" cy="18" r="1.6"/><circle cx="116" cy="4" r="2.0"/><circle cx="146" cy="7" r="1.9"/><circle cx="23" cy="2" r="2.1"/><circle cx="262" cy="12" r="2.1"/><circle cx="220" cy="36" r="0.9"/><circle cx="246" cy="7" r="1.0"/><circle cx="153" cy="15" r="1.7"/><circle cx="268" cy="34" r="1.4"/><circle cx="58" cy="21" r="1.0"/><circle cx="244" cy="3" r="1.3"/><circle cx="101" cy="7" r="1.5"/><circle cx="61" cy="10" r="1.1"/><circle cx="140" cy="8" r="2.0"/><circle cx="3" cy="31" r="1.7"/><circle cx="204" cy="3" r="1.9"/><circle cx="127" cy="17" r="1.7"/><circle cx="266" cy="27" r="0.9"/><circle cx="165" cy="0" r="2.0"/><circle cx="64" cy="2" r="1.0"/><circle cx="35" cy="30" r="2.2"/><circle cx="44" cy="32" r="1.5"/><circle cx="161" cy="10" r="1.2"/><circle cx="179" cy="24" r="1.7"/><circle cx="155" cy="23" r="1.2"/><circle cx="168" cy="27" r="1.0"/><circle cx="1" cy="24" r="1.9"/><circle cx="91" cy="2" r="1.3"/><circle cx="194" cy="2" r="1.7"/><circle cx="220" cy="3" r="1.3"/><circle cx="254" cy="20" r="1.4"/><circle cx="214" cy="29" r="0.8"/><circle cx="111" cy="34" r="1.2"/><circle cx="36" cy="27" r="1.1"/><circle cx="66" cy="1" r="2.1"/><circle cx="191" cy="35" r="1.9"/><circle cx="134" cy="7" r="1.4"/><circle cx="63" cy="33" r="1.9"/><circle cx="55" cy="20" r="1.6"/><circle cx="52" cy="37" r="1.8"/><circle cx="242" cy="9" r="1.1"/><circle cx="199" cy="2" r="1.5"/><circle cx="50" cy="24" r="1.1"/><circle cx="12" cy="21" r="2.0"/><circle cx="62" cy="1" r="2.0"/><circle cx="246" cy="18" r="1.6"/><circle cx="45" cy="2" r="2.2"/><circle cx="261" cy="33" r="1.8"/><circle cx="54" cy="35" r="1.8"/><circle cx="31" cy="35" r="1.3"/><circle cx="92" cy="4" r="1.1"/><circle cx="92" cy="15" r="1.4"/><circle cx="201" cy="16" r="1.3"/><circle cx="203" cy="22" r="1.6"/><circle cx="42" cy="24" r="1.5"/><circle cx="211" cy="10" r="1.4"/><circle cx="264" cy="30" r="1.0"/><circle cx="205" cy="9" r="1.0"/><circle cx="254" cy="30" r="2.1"/><circle cx="264" cy="28" r="1.6"/><circle cx="95" cy="8" r="1.2"/><circle cx="101" cy="9" r="1.6"/><circle cx="161" cy="14" r="2.0"/><circle cx="151" cy="26" r="1.6"/><circle cx="136" cy="13" r="1.2"/><circle cx="137" cy="30" r="1.9"/><circle cx="102" cy="11" r="1.6"/><circle cx="122" cy="20" r="1.5"/><circle cx="73" cy="26" r="2.2"/><circle cx="245" cy="38" r="1.1"/><circle cx="14" cy="30" r="2.2"/></g>
<rect x="53" y="1" width="157" height="36" fill="none" stroke="rgba(200,220,220,.5)"/>
<rect x="212" y="1" width="62" height="36" fill="none" stroke="rgba(200,220,220,.5)"/>
<path d="M13 8 h12 v12 h-12z M27 6 h13 v14 h-13z M13 22 h12 v11 h-12z M27 22 h13 v13 h-13z" fill="#fff"/>
<path d="M63 4 l14 4 v28 l-14-4z" fill="#f4d878"/><path d="M75 9 h10 v26 h-10z" fill="#e6c060"/>
<path d="M224 4 l14 4 v28 l-14-4z" fill="#f4d878"/><path d="M236 9 h9 v26 h-9z" fill="#e6c060"/>
</svg>
<div class="a" style="left:225px;top:834px;color:#fff;font-size:13px">飞机大战</div>
<div class="a" style="left:385px;top:834px;color:#fff;font-size:13px">课</div>
<div class="a" style="left:127px;top:862px;width:272px;height:15px;background:#000"></div>
<div class="a" style="left:148px;top:868px;width:251px;height:3px;background:#4060a8"></div>
<svg class="a" style="left:131px;top:864px" width="14" height="10"><path d="M7 1 l-5 4 5 4z M12 1 l-5 4 5 4z" fill="#8aa0c0"/></svg>
<div class="a" style="left:127px;top:877px;width:272px;height:37px;background:linear-gradient(180deg,#2a5590 0%,#1d4070 50%,#142c52 100%)"></div>
<svg class="a" style="left:143px;top:886px" width="14" height="14"><circle cx="3" cy="3" r="1.5" fill="#bcd"/><circle cx="7" cy="2" r="1.5" fill="#bcd"/><circle cx="11" cy="3" r="1.5" fill="#bcd"/><path d="M3 6 q4-1 8 1 q-1 3-3 7 h-2 q0-4-3-8z" fill="#bcd"/></svg>

<!-- window frame behind at x374 -->
<div class="a" style="left:374px;top:914px;width:26px;height:38px;border:4px solid #7cd0ee;border-right:0;border-top:0;border-radius:0 0 0 6px;background:#f5f7f9"></div>

<!-- ============ BOTTOM DESKTOP ICONS ============ -->
<svg class="a" style="left:20px;top:799px" width="34" height="42">
<path d="M1 1 L23 1 L32 10 L32 40 L1 40Z" fill="#f4f4f4" stroke="#b8b8b8"/>
<path d="M23 1 L23 10 L32 10" fill="#dcdcdc" stroke="#b0b0b0"/>
<g stroke="#c8c8d0"><path d="M4 13h25M4 17h25M4 21h25M4 25h25M4 29h25M4 33h25M4 37h25"/></g>
</svg>
<div class="dl" style="left:2px;top:844px;width:70px">wifi.txt</div>
<svg class="a" style="left:86px;top:797px" width="41" height="42">
<defs><linearGradient id="scr" x1="0" y1="0" x2="1" y2="0"><stop offset="0" stop-color="#1020b0"/><stop offset=".55" stop-color="#2a48d8"/><stop offset=".6" stop-color="#c8d0f0"/><stop offset="1" stop-color="#e8ecf8"/></linearGradient></defs>
<path d="M3 9 l13-3 v22 l-13 3z" fill="#d8d8d8" stroke="#888" stroke-width=".8"/>
<rect x="5" y="11" width="2" height="2" fill="#4a4"/>
<path d="M15 2 h26 v26 h-26z" fill="#f0f0f0" stroke="#999" stroke-width=".8"/>
<path d="M17 4 h24 v21 h-24z" fill="url(#scr)"/>
<ellipse cx="32" cy="35" rx="10" ry="4" fill="#e6e6e6" stroke="#aaa" stroke-width=".8"/>
<rect x="29" y="28" width="6" height="5" fill="#ccc"/>
</svg>
<div class="dl" style="left:78px;top:844px;width:60px">计算机</div>
<svg class="a" style="left:20px;top:893px" width="34" height="44">
<path d="M1 1 L23 1 L32 10 L32 42 L1 42Z" fill="#f4f4f4" stroke="#b8b8b8"/>
<path d="M23 1 L23 10 L32 10" fill="#dcdcdc" stroke="#b0b0b0"/>
<g stroke="#c8c8d0"><path d="M4 14h25M4 18h25M4 22h25M4 26h25M4 30h25M4 34h25M4 38h25"/></g>
</svg>
<div class="dl" style="left:2px;top:941px;width:70px">欧泊.txt</div>
<svg class="a" style="left:86px;top:888px" width="48" height="50">
<defs><radialGradient id="glb" cx="40%" cy="35%" r="65%"><stop offset="0" stop-color="#7ad0f8"/><stop offset=".6" stop-color="#2a80d0"/><stop offset="1" stop-color="#0a3a90"/></radialGradient></defs>
<circle cx="20" cy="20" r="18" fill="url(#glb)"/>
<path d="M6 12 q5-8 14-9 q-2 5-7 6 q-3 4 1 8 q-3 5-6 10 q-4-6-2-15z M24 5 q8 2 12 9 l-7 1 q-3-4-5-10z M16 30 q5-2 8 3 q-2 4-8 3z" fill="#4ab83a"/>
<rect x="19.5" y="14.5" width="25" height="23" fill="#f2f2f2" stroke="#999"/>
<path d="M21 16 h22 v19 h-22z" fill="url(#scr)"/>
<ellipse cx="32" cy="44" rx="9" ry="3.5" fill="#e6e6e6" stroke="#aaa" stroke-width=".8"/>
<rect x="29" y="38" width="6" height="4" fill="#ccc"/>
</svg>
<div class="dl" style="left:82px;top:941px;width:60px">网络</div>
<svg class="a" style="left:162px;top:914px" width="52" height="24">
<rect x="7" y="0" width="44" height="22" rx="2" fill="#2a90e0"/><path d="M20 12 q6-10 14-12 h6 l-14 18z" fill="#fff"/><circle cx="44" cy="6" r="2.5" fill="#fff"/><circle cx="44" cy="13" r="2.5" fill="#fff"/>
<rect x="1" y="8" width="15" height="15" fill="#e8eef6"/>
<path d="M5 19 q1-6 7-6 l-2-2 h5 v5 l-2-2 q-5 0-5 5z" fill="#1e5aa8"/>
</svg>
<div class="dl" style="left:150px;top:941px;width:76px">百度云管家</div>
<svg class="a" style="left:237px;top:914px" width="42" height="24">
<rect x="10" y="0" width="30" height="22" fill="#f2f2f2"/>
<rect x="1" y="8" width="15" height="15" fill="#e8eef6"/>
<path d="M5 19 q1-6 7-6 l-2-2 h5 v5 l-2-2 q-5 0-5 5z" fill="#1e5aa8"/>
</svg>
<div class="dl" style="left:225px;top:941px;width:70px">软件助手</div>
<div class="a" style="left:8px;top:955px;width:35px;height:22px;border:1px solid #767676;border-radius:3px;background:linear-gradient(180deg,#fff,#e4e5f0);font-size:12px;color:#575757;padding:3px 0 0 4px;box-shadow:1px 1px 2px rgba(0,0,0,.4)">开始</div>

<!-- ============ TASKBAR ============ -->
<div class="a" style="left:0;top:984px;width:1280px;height:40px;background:linear-gradient(90deg,rgba(60,140,210,.95) 0%,rgba(50,120,190,.95) 40%,rgba(30,75,140,.95) 60%,rgba(25,60,115,.97) 100%);border-top:1px solid rgba(20,40,70,.8)"></div>
<div class="a" style="left:0;top:985px;width:1280px;height:18px;background:linear-gradient(180deg,rgba(255,255,255,.2),rgba(255,255,255,.05))"></div>
<div class="a" style="left:1006px;top:958px;width:16px;height:84px;background:linear-gradient(90deg,rgba(255,255,255,0),rgba(255,255,255,.4),rgba(255,255,255,0));transform:rotate(-40deg);filter:blur(1.5px)"></div>
<!-- start orb -->
<svg class="a" style="left:7px;top:985px" width="40" height="39">
<defs><radialGradient id="orb" cx="50%" cy="55%" r="50%"><stop offset="0" stop-color="#2a6a90"/><stop offset=".7" stop-color="#1e5a8a"/><stop offset=".9" stop-color="#6ac0e8"/><stop offset="1" stop-color="#c8ecff"/></radialGradient></defs>
<circle cx="20" cy="19.5" r="18.5" fill="url(#orb)"/>
<g transform="translate(3.5,2.5)"><path d="M9 9 q4-3 8-1 l-2 9 q-4-2-8 1z" fill="#f2602a"/>
<path d="M18 8 q4 2 9-1 l-2 9 q-4 3-9 1z" fill="#8cc63a"/>
<path d="M6.5 19 q4-3 8-1 l-2 9 q-4-2-8 1z" fill="#1eaaf0"/>
<path d="M15.5 18 q4 2 9-1 l-2 9 q-4 3-9 1z" fill="#ffc020"/></g>
<ellipse cx="20" cy="9" rx="13" ry="6" fill="#fff" opacity=".18"/>
</svg>
<!-- pinned -->
<div class="tbtn" style="left:60px;top:986px;width:51px;height:37px"></div>
<div class="a" style="left:112px;top:986px;width:3px;height:37px;border:1px solid rgba(255,255,255,.25);border-radius:2px"></div>
<svg class="a" style="left:69px;top:991px" width="34" height="28">
<rect x="2" y="4" width="28" height="20" fill="#f0d070"/><rect x="2" y="4" width="12" height="4" fill="#e8b840"/>
<rect x="5" y="2" width="6" height="3" fill="#40a040"/><rect x="12" y="3" width="6" height="3" fill="#d04040"/><rect x="18" y="4" width="6" height="3" fill="#4070d0"/>
<rect x="2" y="12" width="30" height="14" fill="#f6e090"/><path d="M8 26 v-8 h18 v8" fill="none" stroke="#80a8e0" stroke-width="2"/>
</svg>
<svg class="a" style="left:135px;top:991px" width="30" height="28"><rect x="8" y="2" width="20" height="24" fill="#c8dff0" opacity=".7"/><circle cx="13" cy="14" r="9" fill="#f07020"/><path d="M10 9 l8 5 -8 5z" fill="#fff"/></svg>
<svg class="a" style="left:196px;top:988px" width="34" height="34"><circle cx="17" cy="17" r="15" fill="#fff"/><circle cx="17" cy="17" r="12.5" fill="#1a7ad0"/><text x="17" y="23" font-size="17" font-weight="bold" fill="#fff" text-anchor="middle" font-family="Liberation Sans">K</text></svg>
<svg class="a" style="left:258px;top:987px" width="34" height="34"><path d="M3 8 h28 v24 h-28z" fill="#f0f0f0" stroke="#bbb"/><path d="M3 8 l4-4 h20 l4 4z" fill="#3a70d0"/><path d="M10 10 q7-10 14 0" fill="none" stroke="#e040a0" stroke-width="2"/><circle cx="17" cy="21" r="5" fill="#c09070"/></svg>
<svg class="a" style="left:322px;top:989px" width="32" height="30"><rect x="3" y="3" width="12" height="11" fill="#40c040"/><rect x="17" y="3" width="12" height="11" fill="#f0b020"/><rect x="3" y="16" width="12" height="11" fill="#f07010"/><rect x="17" y="16" width="12" height="11" fill="#30c0e0"/></svg>
<svg class="a" style="left:382px;top:988px" width="34" height="34"><circle cx="17" cy="17" r="14" fill="#38a8e8"/><path d="M9 25 l5-10 l11-6 l-5 10z" fill="#fff"/></svg>
<div class="tbtn" style="left:431px;top:986px;width:51px;height:37px"></div>
<div class="a" style="left:483px;top:986px;width:3px;height:37px;border:1px solid rgba(255,255,255,.25);border-radius:2px"></div>
<svg class="a" style="left:440px;top:987px" width="36" height="36">
<path d="M8.5 18.5 h19 a10 10 0 1 0 -2.6 8.2" fill="none" stroke="#3cb0ee" stroke-width="5.5"/>
<path d="M8.5 18.5 h19" stroke="#9ad8f8" stroke-width="1.5"/>
<path d="M4.5 31 C0 22 16 5 31 5 C35 9 32 15 28 18" fill="none" stroke="#f0c838" stroke-width="2.6"/>
</svg>
<div class="tbtn" style="left:493px;top:986px;width:54px;height:37px;background:linear-gradient(180deg,rgba(255,255,255,.45),rgba(255,255,255,.2))"></div>
<div class="a" style="left:548px;top:986px;width:3px;height:37px;border:1px solid rgba(255,255,255,.25);border-radius:2px"></div>
<svg class="a" style="left:504px;top:987px" width="34" height="36">
<path d="M3 3 h16 l7 7 v23 h-23z" fill="#fff" stroke="#555" stroke-dasharray="1.5 1"/><path d="M19 3 v7 h7" fill="#ddd" stroke="#777"/>
<g stroke="#999"><path d="M6 9h9M6 12h11M6 15h9M6 18h7M6 21h8M6 24h7M6 27h8"/></g>
<svg x="11" y="12" width="23" height="23" viewBox="0 0 24 24"><path d="M11.6 1 C7 1 7.3 3 7.3 3 v2.1 h4.4 v0.6 H5.5 S2.5 5.4 2.5 10.1 s2.6 4.5 2.6 4.5 h1.6 v-2.2 s-0.1-2.6 2.6-2.6 h4.4 s2.5 0 2.5-2.4 V3.5 S16.5 1 11.6 1z M9.2 2.4 a0.8 0.8 0 1 1 0 1.6 a0.8 0.8 0 1 1 0-1.6z" fill="#1c2c84"/>
<path d="M12.4 23 C17 23 16.7 21 16.7 21 v-2.1 h-4.4 v-0.6 h6.2 s3 0.3 3-4.4 s-2.6-4.5-2.6-4.5 h-1.6 v2.2 s0.1 2.6-2.6 2.6 H10.3 s-2.5 0-2.5 2.4 v3.9 S7.5 23 12.4 23z M14.8 21.6 a0.8 0.8 0 1 1 0-1.6 a0.8 0.8 0 1 1 0 1.6z" fill="#807a24"/></svg>
</svg>
<div class="tbtn" style="left:556px;top:986px;width:57px;height:37px;background:linear-gradient(90deg,#3a9a50 0%,#40d040 100%);border-color:rgba(255,255,255,.4)"></div>
<svg class="a" style="left:566px;top:987px" width="38" height="36">
<path d="M6 30 l4-8 a14 14 0 1 1 6 6z" fill="#0a3a60"/>
<circle cx="20" cy="16" r="13" fill="#1aa0dc" stroke="#0a3060" stroke-width="1.5"/>
<g fill="#7ad8fa"><circle cx="20" cy="9" r="3.2"/><circle cx="13.5" cy="14" r="3.2"/><circle cx="26.5" cy="14" r="3.2"/><circle cx="16" cy="22" r="3.2"/><circle cx="24" cy="22" r="3.2"/></g>
<circle cx="20" cy="16" r="1.3" fill="#7ad8fa"/>
</svg>
<!-- tray -->
<div class="a" style="left:956px;top:995px;font-family:'Liberation Mono',monospace;font-size:12.5px;color:#fff">CH</div>
<svg class="a" style="left:950px;top:985px" width="200" height="39">
<path d="M31 15 q3-4 7-1 q4 3 5-4" fill="none" stroke="#ccc" stroke-width="1"/>
<rect x="28.5" y="16.5" width="15" height="8" rx="1.5" fill="#e6e6e6" stroke="#999"/>
<g fill="#999"><rect x="30.5" y="18.5" width="2" height="1.3"/><rect x="33.5" y="18.5" width="2" height="1.3"/><rect x="36.5" y="18.5" width="2" height="1.3"/><rect x="39.5" y="18.5" width="2" height="1.3"/><rect x="31" y="21.5" width="10" height="1.3"/></g>
<rect x="56" y="12" width="12" height="10" fill="#2a4aa8" stroke="#cfd8e8"/>
<path d="M62 13 l4 7 h-8z" fill="#f2d020"/>
<path d="M58 21 l3 4 l7-9" fill="none" stroke="#2ec030" stroke-width="2.4"/>
<path d="M81 13 q7-3 14 0 q0 8-7 13 q-7-5-7-13z" fill="#fff"/>
<path d="M83 14.5 q5-2 10 0 q0 6-5 9.5 q-5-3.5-5-9.5z" fill="#2a78e0"/>
<path d="M85 17 l3 3 3-3" fill="none" stroke="#fff" stroke-width="1.6"/>
<rect x="104" y="12" width="15" height="15" rx="2" fill="#1a4a90"/>
<path d="M106 13 h9 q3 0 3 4 v9 h-7 q-4-5-2-9 q-2-1-4-1z" fill="#3aa8e8"/>
<path d="M104 14 l6-1 l-1 3z" fill="#f0b020"/>
<path d="M129 19 l4-2 v5z M133 17 l4-3 v10 l-4-3z" fill="#8060c0" opacity=".75"/>
<path d="M154 12 v5 h4 v-5 M156 17 v11 h4" fill="none" stroke="#fff" stroke-width="1.3"/>
<rect x="158.5" y="15.5" width="9" height="8" fill="#20406a" stroke="#fff" stroke-width="1.3"/>
<path d="M161 27 h5" stroke="#fff" stroke-width="1.3"/>
<path d="M180 17 h3 l4-4 v14 l-4-4 h-3z" fill="#fff"/>
</svg>
<div class="a" style="left:1191px;top:988px;font-size:12.5px;color:#fff">22:29</div>
<div class="a" style="left:1161px;top:1006px;font-size:12.5px;color:#fff">2016/4/2 星期六</div>
<div class="a" style="left:1266px;top:985px;width:14px;height:39px;border:1px solid rgba(255,255,255,.35);background:linear-gradient(180deg,rgba(255,255,255,.25),rgba(255,255,255,.05))"></div>

</body></html>
